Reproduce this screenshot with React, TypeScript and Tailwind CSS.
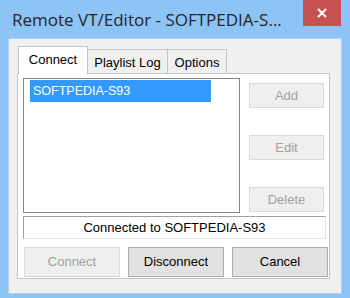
import React from 'react';

const ui = { fontFamily: '"Liberation Sans", Arial, sans-serif' };
const title = { fontFamily: '"Open Sans", "Noto Sans", sans-serif' };

const SideButton: React.FC<{ label: string }> = ({ label }) => (
  <div className="flex h-[25px] w-[75px] items-center justify-center border border-[#d9d9d9] bg-[#efefef] text-[13px] text-[#a0a0a0]">
    {label}
  </div>
);

const BottomButton: React.FC<{ label: string; disabled?: boolean }> = ({ label, disabled }) => (
  <div
    className={
      disabled
        ? 'flex h-[30px] w-[96px] items-center justify-center border border-[#d9d9d9] bg-[#efefef] text-[13px] text-[#a0a0a0]'
        : 'flex h-[30px] w-[96px] items-center justify-center border border-[#adadad] bg-[#e1e1e1] text-[13px] text-black'
    }
  >
    {label}
  </div>
);

export default function App() {
  return (
    <div className="relative flex h-[298px] w-[350px] flex-col overflow-hidden bg-[#8cc4f6]" style={ui}>
      {/* Title bar */}
      <div className="flex h-[38px] shrink-0 items-center pl-[12px] pt-[2px]">
        <span className="text-[17px] text-[#262626]" style={title}>
          Remote VT/Editor - SOFTPEDIA-S...
        </span>
      </div>
      <div className="absolute right-[9px] top-0 flex h-[26px] w-[38px] items-center justify-center bg-[#c75050]">
        <svg width="10" height="10" viewBox="0 0 10 10">
          <path d="M1 1 L9 9 M9 1 L1 9" stroke="white" strokeWidth="2" />
        </svg>
      </div>

      {/* Client area */}
      <div className="mx-[8px] h-[256px] border border-[#b6cfe8] bg-[#f0f0f0] pl-[8px] pt-[7px]">
        {/* Tabs */}
        <div className="flex h-[27px] items-end pl-px">
          <div className="relative z-10 -mb-px flex h-[28px] w-[70px] items-center justify-center border border-b-0 border-[#c4c4c4] bg-white pb-[1px] text-[13px] text-black">
            Connect
          </div>
          <div className="flex h-[24px] w-[80px] items-center justify-center border border-l-0 border-b-0 border-[#c4c4c4] bg-[#f0f0f0] pt-[2px] text-[13px] text-black">
            Playlist Log
          </div>
          <div className="flex h-[24px] w-[59px] items-center justify-center border border-l-0 border-b-0 border-[#c4c4c4] bg-[#f0f0f0] pt-[2px] text-[13px] text-black">
            Options
          </div>
        </div>

        {/* Tab page */}
        <div className="h-[206px] w-[313px] border border-[#c4c4c4] bg-white pl-[5px] pt-[4px]">
          <div className="flex">
            <div className="h-[135px] w-[217px] border border-[#828790] bg-white p-[1px]">
              <div className="ml-[5px] flex h-[22px] w-[181px] items-center bg-[#3399ff] pl-[3px] text-[12.5px] text-white">
                SOFTPEDIA-S93
              </div>
            </div>
            <div className="ml-[9px] flex flex-col gap-[27px] pt-[5px]">
              <SideButton label="Add" />
              <SideButton label="Edit" />
              <SideButton label="Delete" />
            </div>
          </div>
          <div className="mt-[3px] flex h-[23px] w-[303px] items-center justify-center border border-[#a0a0a0] border-b-[#e3e3e3] border-r-[#e3e3e3] bg-white text-[13px] text-black">
            Connected to SOFTPEDIA-S93
          </div>
          <div className="mt-[8px] flex gap-[8px] pl-[1px]">
            <BottomButton label="Connect" disabled />
            <BottomButton label="Disconnect" />
            <BottomButton label="Cancel" />
          </div>
        </div>
      </div>
    </div>
  );
}
